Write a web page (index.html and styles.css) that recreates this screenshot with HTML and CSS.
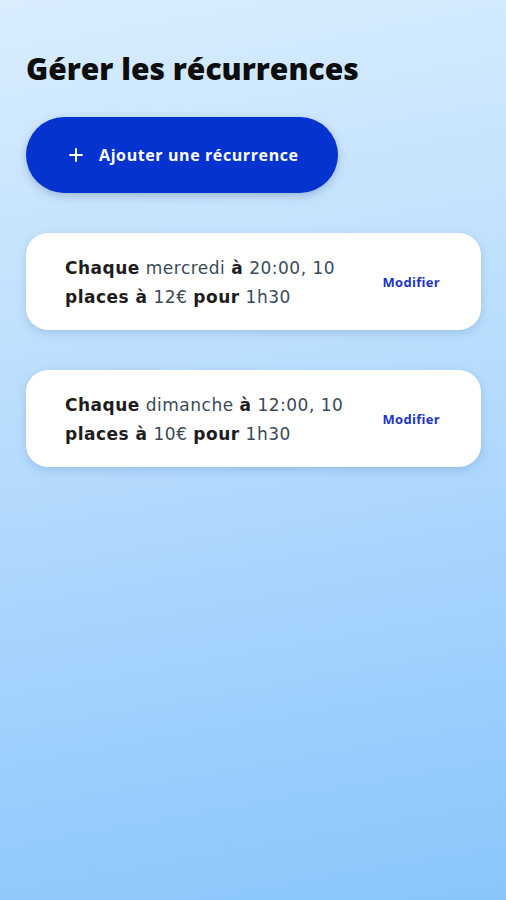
FILE: index.html
```html
<!DOCTYPE html>
<html lang="fr">
<head>
    <meta charset="UTF-8">
    <meta name="viewport" content="width=device-width, initial-scale=1">
    <title>Gérer les récurrences</title>
    <link rel="stylesheet" href="styles.css">
</head>
<body>

<main class="page">
    <h1 class="title">Gérer les récurrences</h1>

    <button type="button" class="addButton">
        <svg class="plusIcon" width="16" height="16" viewBox="0 0 16 16" aria-hidden="true">
            <path d="M8 2v12M2 8h12" stroke="#fff" stroke-width="2" stroke-linecap="round"/>
        </svg>
        <span>Ajouter une récurrence</span>
    </button>

    <!-- Recurrences list -->
    <div class="recurrenceList">
        <div class="recurrenceCard">
            <p class="recurrenceText">
                <b>Chaque</b> <span class="value">mercredi</span> <b>à</b> <span class="value">20:00, 10</span><br>
                <b>places à</b> <span class="value">12€</span> <b>pour</b> <span class="value">1h30</span>
            </p>
            <a href="#" class="editLink">Modifier</a>
        </div>

        <div class="recurrenceCard">
            <p class="recurrenceText">
                <b>Chaque</b> <span class="value">dimanche</span> <b>à</b> <span class="value">12:00, 10</span><br>
                <b>places à</b> <span class="value">10€</span> <b>pour</b> <span class="value">1h30</span>
            </p>
            <a href="#" class="editLink">Modifier</a>
        </div>
    </div>
</main>

</body>
</html>
```

FILE: styles.css
```css
html, body {
    margin: 0;
    height: 100%;
}

body {
    font-family: "Open Sans", "Noto Sans", sans-serif;
    background: linear-gradient(170deg, #d9edfd 0%, #b7dcfd 45%, #8ac5fb 100%);
    color: #1b1b1b;
}

.page {
    padding: 47px 25px 0 26px;
}

.title {
    margin: 0 0 26px;
    font-size: 30px;
    line-height: 44px;
    font-weight: 800;
    color: #0d0d0d;
}

.addButton {
    display: flex;
    align-items: center;
    gap: 15px;
    width: 312px;
    height: 76px;
    padding: 0 0 0 42px;
    border: none;
    border-radius: 38px;
    background-color: #0533d0;
    color: #fff;
    font-family: inherit;
    font-size: 16px;
    font-weight: 700;
    letter-spacing: 0.6px;
    box-shadow: 0 3px 8px rgba(20, 50, 120, 0.25);
    cursor: pointer;
}

.plusIcon {
    flex-shrink: 0;
}

.recurrenceList {
    display: flex;
    flex-direction: column;
    gap: 40px;
    margin-top: 40px;
}

.recurrenceCard {
    display: flex;
    align-items: center;
    justify-content: space-between;
    height: 97px;
    padding: 0 40px 0 39px;
    background-color: #fff;
    border-radius: 22px;
    box-shadow: 0 3px 8px rgba(40, 80, 140, 0.18);
    box-sizing: border-box;
}

.recurrenceText {
    margin: 0;
    padding-top: 3px;
    font-family: "DejaVu Sans", sans-serif;
    font-size: 17px;
    line-height: 29px;
    letter-spacing: 0.5px;
    white-space: nowrap;
}

.recurrenceText b {
    font-weight: 700;
    color: #1d1d1d;
}

.value {
    font-weight: 400;
    color: #3a4a57;
}

.editLink {
    margin-right: 1px;
    font-size: 13px;
    font-weight: 700;
    letter-spacing: 0.3px;
    color: #1c34c4;
    text-decoration: none;
}
```
